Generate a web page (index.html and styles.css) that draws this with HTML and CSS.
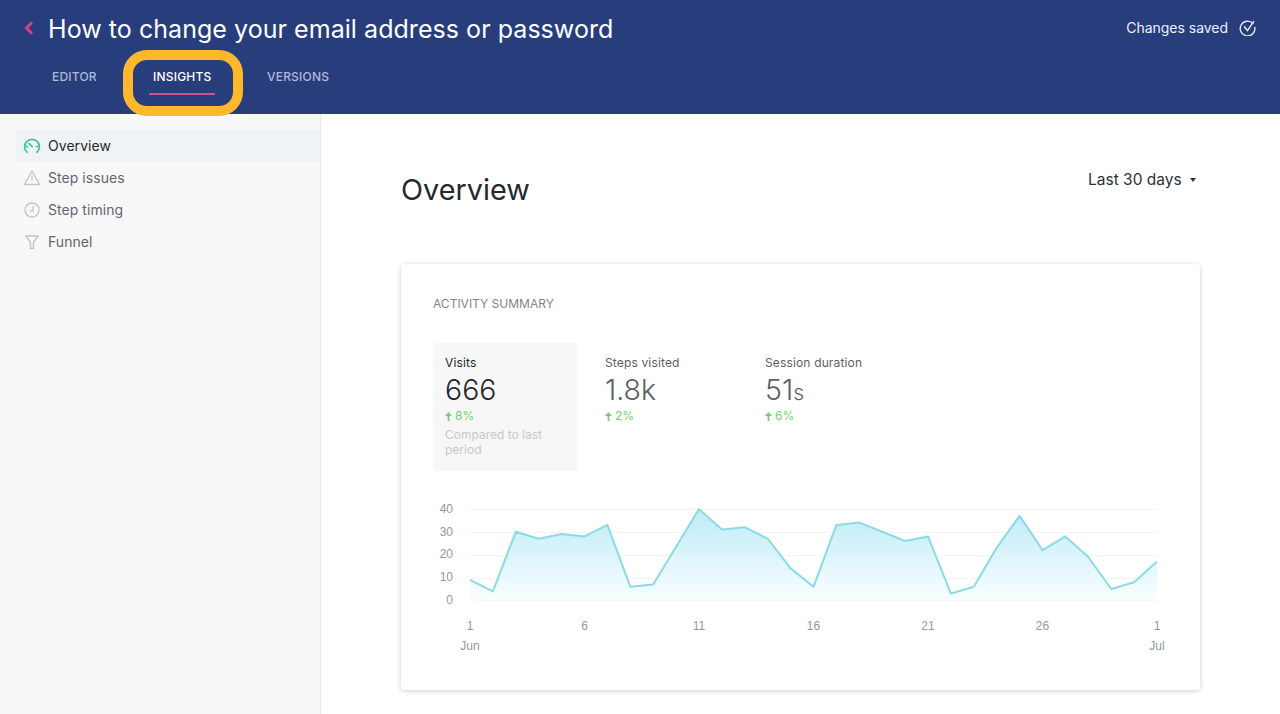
FILE: index.html
```html
<!DOCTYPE html>
<html lang="en">
<head>
    <meta charset="UTF-8">
    <meta name="viewport" content="width=device-width, initial-scale=1.0">
    <title>Insights overview</title>
    <link rel="stylesheet" href="styles.css">
</head>
<body>
    <header class="topbar">
        <div class="title-row">
            <div class="title-left">
                <svg class="back-icon" width="10" height="14" viewBox="0 0 10 14"><path d="M8 1.500 2.500 7 8 12.500" fill="none" stroke="#d6437f" stroke-width="3"/></svg>
                <h1>How to change your email address or password</h1>
            </div>
            <div class="saved">
                <span>Changes saved</span>
                <svg width="17" height="17" viewBox="0 0 18 18" fill="none" stroke="#eef1fa" stroke-width="1.4" stroke-linecap="round"><path d="M14.800 4.800A7.800 7.800 0 1 0 16.800 9"/><path d="M5.800 8.200 9 12.400 15.600 2.600"/></svg>
            </div>
        </div>
        <nav class="tabs">
            <div class="tab">EDITOR</div>
            <div class="tab active">INSIGHTS<span class="highlight"></span></div>
            <div class="tab">VERSIONS</div>
        </nav>
    </header>

    <div class="layout">
        <aside class="sidebar">
            <div class="side-item selected">
                <svg width="18" height="18" viewBox="0 0 18 18" fill="none" stroke="#3cc3a0" stroke-width="1.8" stroke-linecap="round"><path d="M4 15.200A7.400 7.400 0 1 1 14 15.200"/><path d="M6 6.600 9.200 9.400"/><path d="M3.800 9.600h.6M13.600 9.600h.6"/></svg>
                <span>Overview</span>
            </div>
            <div class="side-item">
                <svg width="18" height="18" viewBox="0 0 18 18" fill="none" stroke="#c3c5c9" stroke-width="1.4" stroke-linejoin="round"><path d="M9 2 1.500 15.500h15z"/><path d="M9 7v4M9 12.600v.8"/></svg>
                <span>Step issues</span>
            </div>
            <div class="side-item">
                <svg width="18" height="18" viewBox="0 0 18 18" fill="none" stroke="#c3c5c9" stroke-width="1.4" stroke-linecap="round"><circle cx="9" cy="9" r="7"/><path d="M10 5.500V10H7.500"/></svg>
                <span>Step timing</span>
            </div>
            <div class="side-item">
                <svg width="18" height="18" viewBox="0 0 18 18" fill="none" stroke="#c3c5c9" stroke-width="1.4" stroke-linejoin="round"><path d="M3 3h12L10.500 9.500V15.500h-3V9.500z"/></svg>
                <span>Funnel</span>
            </div>
        </aside>

        <main class="content">
            <div class="content-head">
                <h2>Overview</h2>
                <div class="range">Last 30 days <span class="caret"></span></div>
            </div>

            <section class="card">
                <div class="card-label">ACTIVITY SUMMARY</div>
                <div class="stats">
                    <div class="stat current">
                        <div class="stat-name">Visits</div>
                        <div class="stat-value">666</div>
                        <div class="stat-delta">
                            <svg class="arrow" width="7" height="9" viewBox="0 0 7 9"><path d="M3.500 0 7 4H4.400v5H2.600V4H0z" fill="#74cf70"/></svg>
                            <span>8%</span>
                        </div>
                        <div class="stat-note">Compared to last period</div>
                    </div>
                    <div class="stat">
                        <div class="stat-name">Steps visited</div>
                        <div class="stat-value">1.8k</div>
                        <div class="stat-delta">
                            <svg class="arrow" width="7" height="9" viewBox="0 0 7 9"><path d="M3.500 0 7 4H4.400v5H2.600V4H0z" fill="#74cf70"/></svg>
                            <span>2%</span>
                        </div>
                    </div>
                    <div class="stat">
                        <div class="stat-name">Session duration</div>
                        <div class="stat-value">51<small>s</small></div>
                        <div class="stat-delta">
                            <svg class="arrow" width="7" height="9" viewBox="0 0 7 9"><path d="M3.500 0 7 4H4.400v5H2.600V4H0z" fill="#74cf70"/></svg>
                            <span>6%</span>
                        </div>
                    </div>
                </div>

                <svg class="chart" width="735" height="165" viewBox="0 0 735 165">
                    <defs>
                        <linearGradient id="areaFill" x1="0" y1="0" x2="0" y2="1">
                            <stop offset="0" stop-color="#bdebf7"/>
                            <stop offset="1" stop-color="#fafeff"/>
                        </linearGradient>
                    </defs>
                    <g class="grid-lines">
                        <line x1="37" x2="725" y1="14.500" y2="14.500"/>
                        <line x1="37" x2="725" y1="37.500" y2="37.500"/>
                        <line x1="37" x2="725" y1="60.500" y2="60.500"/>
                        <line x1="37" x2="725" y1="83.500" y2="83.500"/>
                        <line x1="37" x2="725" y1="105.500" y2="105.500"/>
                    </g>
                    <polygon fill="url(#areaFill)" points="37,105.500 37,84.900 59.900,96.300 82.800,36.800 105.700,43.700 128.600,39.100 151.500,41.400 174.400,29.900 197.300,91.800 220.200,89.500 243.100,51.700 266,14 288.900,34.500 311.800,32.200 334.700,43.700 357.600,73.400 380.500,91.800 403.400,29.900 426.300,27.600 449.200,36.800 472.100,46 495,41.400 517.900,98.600 540.800,91.800 563.700,52.800 586.600,20.800 609.500,55.100 632.400,41.400 655.300,62 678.200,94 701.100,87.200 724,66.600 724,105.500"/>
                    <polyline class="line" points="37,84.900 59.900,96.300 82.800,36.800 105.700,43.700 128.600,39.100 151.500,41.400 174.400,29.900 197.300,91.800 220.200,89.500 243.100,51.700 266,14 288.900,34.500 311.800,32.200 334.700,43.700 357.600,73.400 380.500,91.800 403.400,29.900 426.300,27.600 449.200,36.800 472.100,46 495,41.400 517.900,98.600 540.800,91.800 563.700,52.800 586.600,20.800 609.500,55.100 632.400,41.400 655.300,62 678.200,94 701.100,87.200 724,66.600"/>
                    <g class="axis y-axis">
                        <text x="20" y="18">40</text>
                        <text x="20" y="41">30</text>
                        <text x="20" y="63">20</text>
                        <text x="20" y="86">10</text>
                        <text x="20" y="109">0</text>
                    </g>
                    <g class="axis x-axis">
                        <text x="37" y="135">1</text>
                        <text x="151.500" y="135">6</text>
                        <text x="266" y="135">11</text>
                        <text x="380.500" y="135">16</text>
                        <text x="495" y="135">21</text>
                        <text x="609.500" y="135">26</text>
                        <text x="724" y="135">1</text>
                        <text x="37" y="155">Jun</text>
                        <text x="724" y="155">Jul</text>
                    </g>
                </svg>
            </section>
        </main>
    </div>
</body>
</html>
```

FILE: styles.css
```css
* {
    margin: 0;
    padding: 0;
    box-sizing: border-box;
}

html, body {
    height: 100%;
    overflow: hidden;
}

body {
    font-family: Inter, "Liberation Sans", sans-serif;
    background: #fff;
    color: #25282d;
}

/* Header */
.topbar {
    height: 114px;
    background: #283d7b;
    padding: 0 24px;
}

.title-row {
    display: flex;
    justify-content: space-between;
    align-items: center;
    height: 56px;
}

.title-left {
    display: flex;
    align-items: center;
}

.back-icon {
    margin-right: 14px;
}

.title-left h1 {
    font-size: 25px;
    font-weight: 400;
    letter-spacing: 0.05px;
    padding-top: 1px;
    color: #fff;
}

.saved {
    display: flex;
    align-items: center;
    gap: 11px;
    padding-bottom: 1px;
    color: #eef1fa;
    font-size: 14px;
    letter-spacing: -0.03px;
}

.tabs {
    display: flex;
    padding-left: 8px;
}

.tab {
    position: relative;
    width: 100px;
    padding: 0 20px;
    height: 42px;
    line-height: 42px;
    font-size: 12px;
    font-weight: 500;
    letter-spacing: 0.2px;
    color: #aeb9da;
}

.tab.active {
    width: 115px;
    color: #fff;
    padding-left: 21px;
}

.tab.active::after {
    content: "";
    position: absolute;
    left: 17px;
    top: 37px;
    width: 66px;
    height: 2px;
    background: #d0508f;
}

/* orange annotation round the active tab */
.highlight {
    position: absolute;
    left: -9px;
    top: -6px;
    width: 120px;
    height: 66px;
    border: 10px solid #fdb82e;
    border-radius: 24px;
}

/* Sidebar */
.layout {
    display: flex;
    height: 600px;
}

.sidebar {
    width: 321px;
    flex-shrink: 0;
    background: #f8f8f9;
    border-right: 1px solid #e8e9eb;
    padding: 16px 0 0 16px;
}

.side-item {
    display: flex;
    align-items: center;
    gap: 7px;
    height: 32px;
    padding-left: 7px;
    padding-bottom: 1px;
    font-size: 14px;
    letter-spacing: 0.05px;
    color: #62666e;
}

.side-item.selected {
    background: #f0f3f5;
    color: #25282d;
}

/* Main content */
.content {
    flex: 1;
    padding: 0 80px;
}

.content-head {
    display: flex;
    justify-content: space-between;
    height: 150px;
    padding-top: 56px;
}

.content-head h2 {
    font-size: 28.8px;
    font-weight: 400;
    line-height: 40px;
}

.range {
    font-size: 15.5px;
    line-height: 20px;
    padding-right: 4px;
    color: #2e3136;
}

.caret {
    display: inline-block;
    width: 0;
    height: 0;
    margin-left: 4px;
    vertical-align: 3px;
    border-left: 3.5px solid transparent;
    border-right: 3.5px solid transparent;
    border-top: 4px solid #2e3136;
}

.card {
    height: 426px;
    background: #fff;
    border-radius: 3px;
    box-shadow: 0 1px 5px rgba(0, 0, 0, 0.2);
    padding: 32px;
}

.card-label {
    font-size: 12px;
    line-height: 15px;
    color: #80848b;
}

.stats {
    display: flex;
    gap: 16px;
    margin-top: 32px;
}

.stat {
    width: 144px;
    height: 128px;
    padding: 12px;
    color: #5c6067;
}

.stat.current {
    background: #f7f7f7;
    color: #25282d;
}

.stat-name {
    font-size: 12px;
    line-height: 15px;
    letter-spacing: 0.15px;
}

.stat-value {
    font-size: 28.5px;
    font-weight: 300;
    line-height: 32px;
    margin-top: 4px;
}

.stat-value small {
    font-size: 21px;
    line-height: 0;
}

.stat-delta {
    display: flex;
    align-items: center;
    gap: 3px;
    font-size: 12px;
    line-height: 18px;
    margin-top: 1px;
    color: #74cf70;
}

.stat-note {
    font-size: 12px;
    line-height: 15px;
    margin-top: 2px;
    color: #c6c8cb;
}

/* Chart */
.chart {
    display: block;
    margin-top: 24px;
}

.grid-lines line {
    stroke: #f3f4f5;
    stroke-width: 1;
}

.line {
    fill: none;
    stroke: #8bdbe6;
    stroke-width: 2;
    stroke-linejoin: round;
}

.axis text {
    font-family: "Liberation Sans", Arial, sans-serif;
    font-size: 12px;
    fill: #94979b;
}

.y-axis text {
    text-anchor: end;
}

.x-axis text {
    text-anchor: middle;
}
```
